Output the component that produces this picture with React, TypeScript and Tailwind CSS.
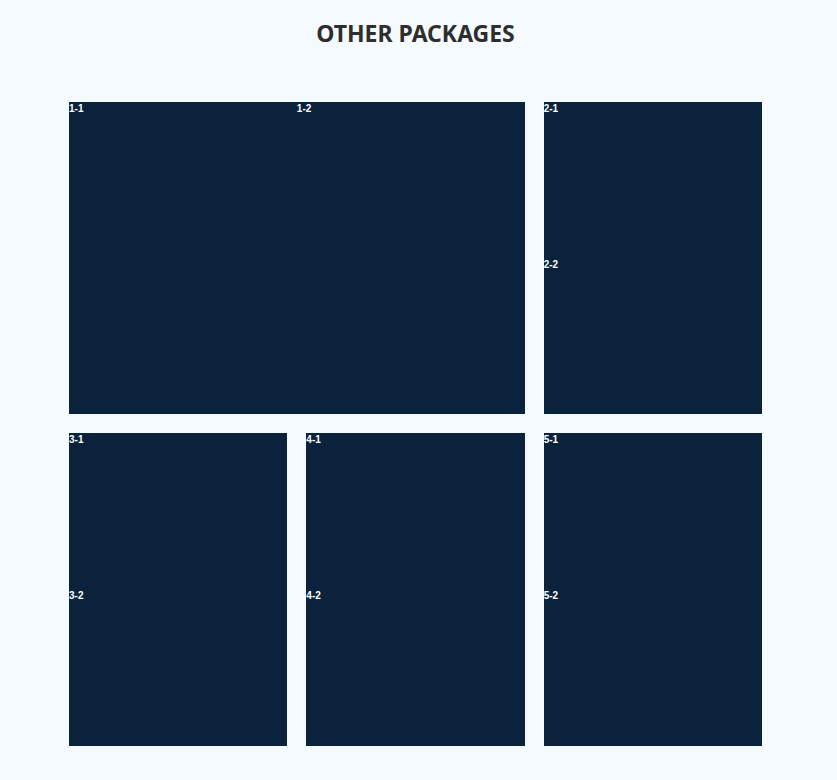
import React from 'react';

const Cell: React.FC<{ label: string; className?: string }> = ({ label, className = '' }) => (
    <div className={`flex-1 ${className}`}>
        <span className="block text-[10px] leading-[12px] font-bold text-white">{label}</span>
    </div>
);

const App: React.FC = () => {
    return (
        <div className="min-h-[780px] bg-[#f5faff] font-['Liberation_Sans',sans-serif]">
            <div className="ml-[69px] w-[693px] pt-[18px]">
                <h2 className="text-center text-[23px] leading-[30px] font-bold text-[#2e2e2e] font-['Noto_Sans',sans-serif]">
                    OTHER PACKAGES
                </h2>
                <div className="mt-[54px] grid grid-cols-3 grid-rows-[312px_313px] gap-[19px]">
                    <div className="col-span-2 flex bg-[#0b223d] pt-[1px]">
                        <Cell label="1-1" />
                        <Cell label="1-2" />
                    </div>
                    <div className="flex flex-col bg-[#0b223d] pt-[1px]">
                        <Cell label="2-1" />
                        <Cell label="2-2" />
                    </div>
                    <div className="flex flex-col bg-[#0b223d] pt-[1px]">
                        <Cell label="3-1" />
                        <Cell label="3-2" />
                    </div>
                    <div className="flex flex-col bg-[#0b223d] pt-[1px]">
                        <Cell label="4-1" />
                        <Cell label="4-2" />
                    </div>
                    <div className="flex flex-col bg-[#0b223d] pt-[1px]">
                        <Cell label="5-1" />
                        <Cell label="5-2" />
                    </div>
                </div>
            </div>
        </div>
    );
};

export default App;
